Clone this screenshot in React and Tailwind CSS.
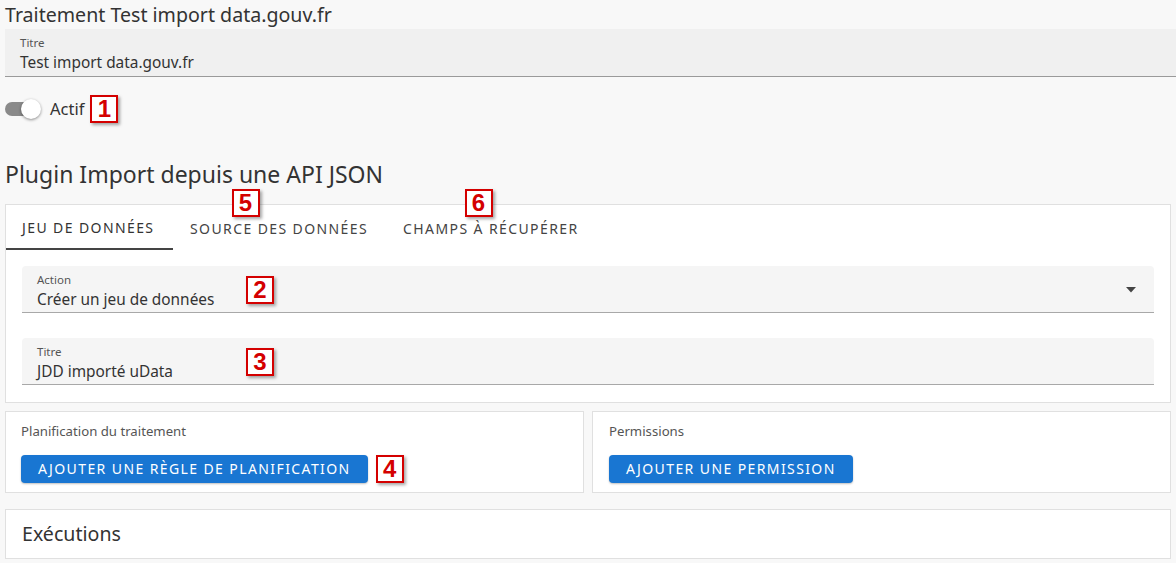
import React from "react";

const font = { fontFamily: "'Noto Sans', Lato, sans-serif" };

function Marker({ n }) {
  return (
    <span
      className="inline-flex items-center justify-center w-[28px] h-[28px] border-2 border-[#d40000] bg-white text-[#d40000] font-bold text-[24px] leading-none shadow-[2px_2px_3px_rgba(0,0,0,0.35)]"
      style={{ fontFamily: "'Liberation Sans', Arial, sans-serif" }}
    >
      {n}
    </span>
  );
}

function Field({ label, value, marker, select }) {
  return (
    <div className="relative h-[47px] bg-[#f5f5f5] rounded-t-[4px] border-b border-[#a8a8a8] px-[15px] pt-[7px]">
      <div className="text-[11.5px] leading-[14px] text-[#555]">{label}</div>
      <div className="text-[15.4px] leading-[20px] text-[#333] mt-[3px]">{value}</div>
      {marker && (
        <div className="absolute left-[224px] top-[10px]">
          <Marker n={marker} />
        </div>
      )}
      {select && (
        <svg className="absolute right-[18px] top-[21px]" width="10" height="6" viewBox="0 0 10 6">
          <path d="M0 0h10L5 5.5z" fill="#444" />
        </svg>
      )}
    </div>
  );
}

export default function App() {
  return (
    <div className="min-h-screen w-[1176px] bg-[#f8f8f8] text-[#333] px-[5px] pt-[3px]" style={font}>
      <h1 className="text-[19.6px] leading-[24px] text-[#333]">Traitement Test import data.gouv.fr</h1>
      <div className="mt-[2px] h-[48px] bg-[#f0f0f0] border-b border-[#9a9a9a] px-[15px] pt-[7px] -mr-[5px]">
        <div className="text-[11.5px] leading-[14px] text-[#555]">Titre</div>
        <div className="text-[15.4px] leading-[20px] mt-[3px]">Test import data.gouv.fr</div>
      </div>

      <div className="flex items-center mt-[16px] h-[32px]">
        <div className="relative w-[36px] h-[20px] flex items-center">
          <div className="w-[34px] h-[14px] rounded-full bg-[#8a8a8a]" />
          <div className="absolute left-[16px] top-0 w-[20px] h-[20px] rounded-full bg-white shadow-[0_1px_3px_rgba(0,0,0,0.45)]" />
        </div>
        <span className="ml-[9px] text-[16.5px]">Actif</span>
        <span className="ml-[6px]">
          <Marker n="1" />
        </span>
      </div>

      <h2 className="mt-[35px] text-[23px] leading-[28px] text-[#333]">Plugin Import depuis une API JSON</h2>

      <div className="relative mt-[16px] bg-white border border-[#e0e0e0]">
        <div className="flex h-[45px] items-stretch">
          <div className="relative px-[16px] pt-[2px] flex items-center text-[14px] tracking-[0.1em] text-[#333] border-b-2 border-[#444] w-[167px]">
            JEU DE DONNÉES
          </div>
          <div className="relative pl-[17px] pr-[17px] pt-[2px] flex items-center text-[14px] tracking-[0.1em] text-[#444]">
            SOURCE DES DONNÉES
            <div className="absolute left-[59px] -top-[16px]">
              <Marker n="5" />
            </div>
          </div>
          <div className="relative pl-[18px] pt-[2px] flex items-center text-[14px] tracking-[0.1em] text-[#444]">
            CHAMPS À RÉCUPÉRER
            <div className="absolute left-[80px] -top-[16px]">
              <Marker n="6" />
            </div>
          </div>
        </div>
        <div className="px-[16px] pt-[16px] pb-[17px] flex flex-col gap-[25px]">
          <Field label="Action" value="Créer un jeu de données" marker="2" select />
          <Field label="Titre" value="JDD importé uData" marker="3" />
        </div>
      </div>

      <div className="grid grid-cols-2 gap-[8px] mt-[8px]">
        <div className="bg-white border border-[#e0e0e0] h-[82px] px-[15px] pt-[10px]">
          <div className="text-[13.2px] text-[#555]">Planification du traitement</div>
          <div className="flex items-center gap-[8px] mt-[13px]">
            <button className="h-[28px] px-[17px] bg-[#1976d2] text-white text-[14px] tracking-[0.1em] rounded-[4px] shadow-[0_1px_2px_rgba(0,0,0,0.25)]">
              AJOUTER UNE RÈGLE DE PLANIFICATION
            </button>
            <Marker n="4" />
          </div>
        </div>
        <div className="bg-white border border-[#e0e0e0] h-[82px] px-[16px] pt-[10px]">
          <div className="text-[13.2px] text-[#555]">Permissions</div>
          <div className="flex items-center mt-[13px]">
            <button className="h-[28px] px-[17px] bg-[#1976d2] text-white text-[14px] tracking-[0.1em] rounded-[4px] shadow-[0_1px_2px_rgba(0,0,0,0.25)]">
              AJOUTER UNE PERMISSION
            </button>
          </div>
        </div>
      </div>

      <div className="mt-[16px] bg-white border border-[#e0e0e0] h-[50px] px-[16px] flex items-center">
        <span className="text-[19.6px] text-[#333]">Exécutions</span>
      </div>
    </div>
  );
}
